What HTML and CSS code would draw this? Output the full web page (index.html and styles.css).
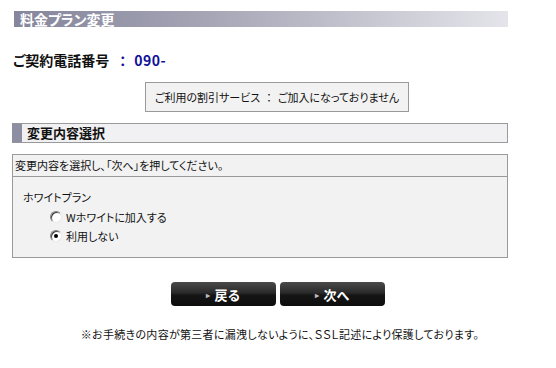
FILE: index.html
```html
<!DOCTYPE html>
<html lang="ja">
<head>
<meta charset="utf-8">
<link rel="stylesheet" href="styles.css">
</head>
<body>
<div class="page">
  <h1 class="title">料金プラン変更</h1>
  <p class="phone"><span class="phone-label">ご契約電話番号</span><span class="phone-colon">：</span><span class="phone-num">090-</span></p>
  <div class="notice">ご利用の割引サービス<span class="colon">：</span>ご加入になっておりません</div>
  <h2 class="section">変更内容選択</h2>
  <div class="panel">
    <div class="panel-head">変更内容を選択し、「次へ」を押してください。</div>
    <div class="panel-body">
      <div class="plan">ホワイトプラン</div>
      <label class="option"><span class="radio"></span>Wホワイトに加入する</label>
      <label class="option"><span class="radio checked"></span>利用しない</label>
    </div>
  </div>
  <div class="buttons">
    <button class="btn"><span class="arrow">▸</span>戻る</button>
    <button class="btn"><span class="arrow">▸</span>次へ</button>
  </div>
  <p class="footer">※お手続きの内容が第三者に漏洩しないように、ＳＳＬ記述により保護しております。</p>
</div>
</body>
</html>
```
FILE: styles.css
```css
html, body { margin: 0; padding: 0; background: #fff; }
body {
  font-family: "Noto Sans CJK JP", "Liberation Sans", sans-serif;
  font-feature-settings: "palt";
  color: #111;
  width: 556px;
}
.page { padding-top: 11px; display: flex; flex-direction: column; }
.title {
  margin: 0 48px 0 14px;
  height: 16px;
  line-height: 16px;
  font-size: 14px;
  font-weight: bold;
  color: #fff;
  padding-left: 6px;
  background: linear-gradient(to right, #85859c 0%, #a6a6b6 40%, #e4e4ea 100%);
}
.phone {
  margin: 24px 0 0 13px;
  height: 18px;
  line-height: 18px;
  font-size: 14px;
  font-weight: bold;
}
.phone-colon { color: #10109a; margin-left: 10px; margin-right: 8px; }
.phone-num { color: #10109a; letter-spacing: 0.5px; }
.notice {
  align-self: center;
  margin: 13px 0 0 0;
  width: 262px;
  height: 28px;
  line-height: 28px;
  border: 1px solid #9a9a9a;
  background: #f2f2f2;
  font-size: 11px;
  text-align: center;
  position: relative;
  left: -1px;
}
.colon { margin: 0 6px; }
.section {
  margin: 11px 48px 0 12px;
  height: 18px;
  line-height: 18px;
  border: 1px solid #9a9a9a;
  border-left: 10px solid #8e8ea2;
  background: #f1f1f3;
  font-size: 13px;
  font-weight: bold;
  padding-left: 5px;
}
.panel {
  margin: 11px 48px 0 12px;
  border: 1px solid #9a9a9a;
  background: #f2f2f2;
  font-size: 11px;
}
.panel-head {
  height: 21px;
  line-height: 20px;
  padding-left: 2px;
  border-bottom: 1px solid #9a9a9a;
}
.panel-body {
  height: 80px;
  padding: 12px 0 0 10px;
  box-sizing: border-box;
  display: flex;
  flex-direction: column;
}
.plan { line-height: 16px; height: 16px; }
.option {
  display: flex;
  align-items: center;
  margin-left: 27px;
  height: 19px;
}
.option:first-of-type { margin-top: 2px; }
.radio {
  width: 10px;
  height: 10px;
  border-radius: 50%;
  background: #fff;
  border: 1px solid;
  border-color: #808080 #e8e8e8 #e8e8e8 #808080;
  box-shadow: inset 1px 1px 0 #404040;
  margin-right: 4px;
  position: relative;
}
.radio.checked::after {
  content: "";
  position: absolute;
  left: 3px; top: 3px;
  width: 4px; height: 4px;
  border-radius: 50%;
  background: #000;
}
.buttons {
  display: flex;
  justify-content: center;
  gap: 4px;
  margin-top: 24px;
}
.btn {
  width: 105px;
  height: 24px;
  border: none;
  border-radius: 4px;
  background: linear-gradient(to bottom, #4a4a4a 0%, #2a2a2a 45%, #151515 55%, #0d0d0d 100%);
  color: #fff;
  font-family: inherit;
  font-size: 13px;
  font-weight: bold;
  display: flex;
  align-items: center;
  justify-content: center;
  padding: 0;
}
.arrow { font-size: 8px; color: #bbb; margin-right: 4px; }
.footer {
  margin: 20px 0 0 0;
  text-align: center;
  font-size: 11px;
  letter-spacing: 0.3px;
  padding-left: 4px;
}
```
